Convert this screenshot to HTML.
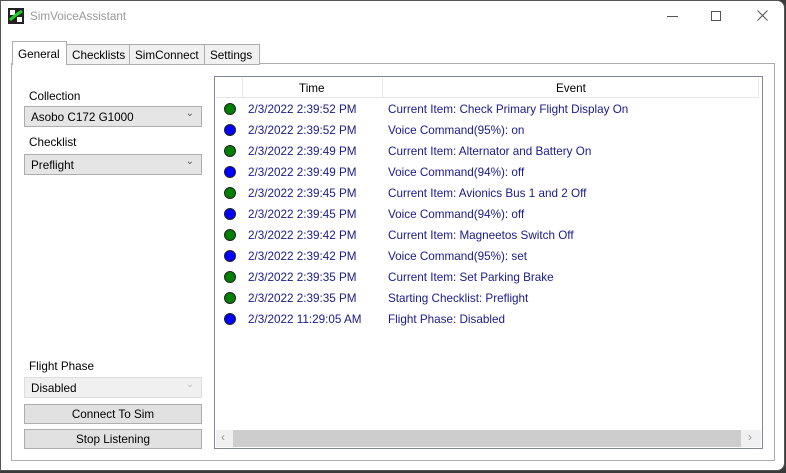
<!DOCTYPE html>
<html><head><style>
*{margin:0;padding:0;box-sizing:border-box}
body{width:786px;height:473px;background:#3a3a3a;font-family:"Liberation Sans",sans-serif;font-size:11.7px;color:#000;position:relative;overflow:hidden}
.win{position:absolute;left:0;top:0;width:785px;height:471px;background:#fff;border:1px solid #555;border-radius:0 8px 8px 0}
.a{position:absolute}
.tab{position:absolute;top:43px;height:21px;border:1px solid #adadad;background:#f0f0f0;padding:4px 5px 0}
.combo{position:absolute;left:23px;width:178px;height:21px;border:1px solid #adadad;background:#e5e5e5;padding:4px 6px}
.combo .c{position:absolute;right:7px;top:1px;font-size:10px;color:#555}
.btn{position:absolute;left:23px;width:178px;border:1px solid #adadad;background:#e1e1e1;text-align:center}
.row{position:absolute;left:215px;height:21px;width:540px;color:#1a1a8a}
.dot{position:absolute;left:8px;top:5px;width:12px;height:12px;border-radius:50%;border:1px solid #222}
.row .t{position:absolute;left:32px;top:5px}
.row .e{position:absolute;left:172px;top:5px}
</style></head><body>
<div class="win">
<svg class="a" style="left:7px;top:7px" width="16" height="16"><rect width="16" height="16" fill="#222"/><rect x="2" y="2" width="5" height="5" fill="#fff"/><rect x="9" y="9" width="5" height="5" fill="#fff"/><path d="M2 12 L8 7 L14 3" stroke="#2c2" stroke-width="3"/></svg>
<div class="a" style="left:29px;top:9px;color:#999">SimVoiceAssistant</div>
<div class="a" style="left:666px;top:15px;width:11px;border-top:1px solid #555"></div>
<div class="a" style="left:710px;top:10px;width:10px;height:10px;border:1px solid #555"></div>
<svg class="a" style="left:756px;top:9px" width="11" height="11"><path d="M0.5 0.5L10.5 10.5M10.5 0.5L0.5 10.5" stroke="#555" stroke-width="1"/></svg>

<div class="a" style="left:10px;top:62px;width:764px;height:398px;border:1px solid #adadad;background:#fff"></div>
<div class="tab" style="left:65px;width:64px">Checklists</div>
<div class="tab" style="left:128px;width:76px">SimConnect</div>
<div class="tab" style="left:203px;width:56px">Settings</div>
<div class="tab" style="left:11px;top:40px;height:24px;width:55px;background:#fff;border-bottom:none;padding-top:6px">General</div>

<div class="a" style="left:28px;top:89px">Collection</div>
<div class="combo" style="top:105px">Asobo C172 G1000<span class="c">⌄</span></div>
<div class="a" style="left:28px;top:135px">Checklist</div>
<div class="combo" style="top:153px">Preflight<span class="c">⌄</span></div>
<div class="a" style="left:28px;top:359px">Flight Phase</div>
<div class="combo" style="top:376px;background:#f0f0f0;border-color:#ddd">Disabled<span class="c" style="color:#bbb">⌄</span></div>
<div class="btn" style="top:403px;height:20px;padding-top:3px">Connect To Sim</div>
<div class="btn" style="top:428px;height:20px;padding-top:3px">Stop Listening</div>

<div class="a" style="left:213px;top:75px;width:549px;height:373px;border:1px solid #828790;background:#fff"></div>
<div class="a" style="left:215px;top:77px;width:543px;height:20px;border-bottom:1px solid #e5e5e5"></div>
<div class="a" style="left:241px;top:77px;width:1px;height:20px;background:#e5e5e5"></div>
<div class="a" style="left:381px;top:77px;width:1px;height:20px;background:#e5e5e5"></div>
<div class="a" style="left:757px;top:77px;width:1px;height:20px;background:#e5e5e5"></div>
<div class="a" style="left:298px;top:81px">Time</div>
<div class="a" style="left:555px;top:81px">Event</div>

<div class="row" style="top:97px"><div class="dot" style="background:#008000"></div><span class="t">2/3/2022 2:39:52 PM</span><span class="e">Current Item: Check Primary Flight Display On</span></div>
<div class="row" style="top:118px"><div class="dot" style="background:#0000ff"></div><span class="t">2/3/2022 2:39:52 PM</span><span class="e">Voice Command(95%): on</span></div>
<div class="row" style="top:139px"><div class="dot" style="background:#008000"></div><span class="t">2/3/2022 2:39:49 PM</span><span class="e">Current Item: Alternator and Battery On</span></div>
<div class="row" style="top:160px"><div class="dot" style="background:#0000ff"></div><span class="t">2/3/2022 2:39:49 PM</span><span class="e">Voice Command(94%): off</span></div>
<div class="row" style="top:181px"><div class="dot" style="background:#008000"></div><span class="t">2/3/2022 2:39:45 PM</span><span class="e">Current Item: Avionics Bus 1 and 2 Off</span></div>
<div class="row" style="top:202px"><div class="dot" style="background:#0000ff"></div><span class="t">2/3/2022 2:39:45 PM</span><span class="e">Voice Command(94%): off</span></div>
<div class="row" style="top:223px"><div class="dot" style="background:#008000"></div><span class="t">2/3/2022 2:39:42 PM</span><span class="e">Current Item: Magneetos Switch Off</span></div>
<div class="row" style="top:244px"><div class="dot" style="background:#0000ff"></div><span class="t">2/3/2022 2:39:42 PM</span><span class="e">Voice Command(95%): set</span></div>
<div class="row" style="top:265px"><div class="dot" style="background:#008000"></div><span class="t">2/3/2022 2:39:35 PM</span><span class="e">Current Item: Set Parking Brake</span></div>
<div class="row" style="top:286px"><div class="dot" style="background:#008000"></div><span class="t">2/3/2022 2:39:35 PM</span><span class="e">Starting Checklist: Preflight</span></div>
<div class="row" style="top:307px"><div class="dot" style="background:#0000ff"></div><span class="t">2/3/2022 11:29:05 AM</span><span class="e">Flight Phase: Disabled</span></div>

<div class="a" style="left:215px;top:429px;width:545px;height:17px;background:#f0f0f0"></div>
<div class="a" style="left:232px;top:429px;width:508px;height:17px;background:#cdcdcd"></div>
<div class="a" style="left:220px;top:429px;color:#999;font-size:12px">‹</div>
<div class="a" style="left:747px;top:429px;color:#999;font-size:12px">›</div>
</div>
</body></html>
